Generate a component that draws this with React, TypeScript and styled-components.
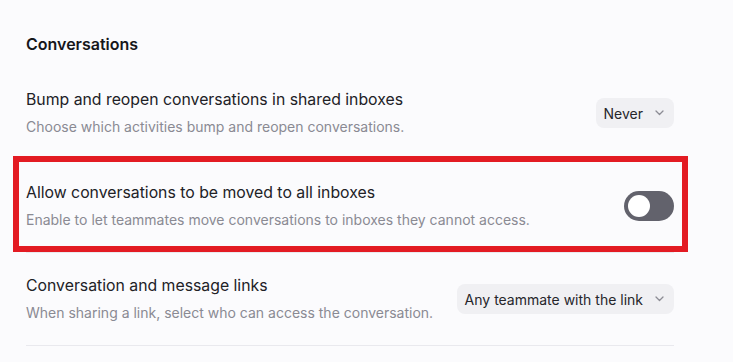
import React from "react";
import styled, { createGlobalStyle, css } from "styled-components";

const GlobalStyle = createGlobalStyle`
  html, body {
    margin: 0;
    padding: 0;
    background: #fbfbfd;
    font-family: Inter, "Noto Sans", sans-serif;
    -webkit-font-smoothing: antialiased;
  }
`;

const Page = styled.div`
  width: 733px;
  height: 362px;
  box-sizing: border-box;
  padding: 34px 59px 0 26px;
  background: #fbfbfd;
  overflow: hidden;
`;

const Heading = styled.h2`
  margin: 0 0 13px;
  font-size: 16px;
  line-height: 20px;
  font-weight: 600;
  color: #16161a;
`;

const List = styled.div`
  display: flex;
  flex-direction: column;
`;

const Row = styled.div<{ $highlighted?: boolean }>`
  position: relative;
  display: flex;
  align-items: center;
  justify-content: space-between;
  padding: 23px 0;
  border-bottom: 1px solid #e9e9ee;
  ${(p) =>
    p.$highlighted &&
    css`
      &::after {
        content: "";
        position: absolute;
        top: -4px;
        bottom: 0;
        left: -13px;
        right: -14px;
        border: 6px solid #e31b23;
        pointer-events: none;
      }
    `}
`;

const Texts = styled.div`
  display: flex;
  flex-direction: column;
  gap: 8px;
`;

const Title = styled.div`
  font-size: 15.8px;
  line-height: 20px;
  color: #212126;
`;

const Description = styled.div`
  font-size: 14px;
  line-height: 18px;
  color: #8a8a93;
`;

const Select = styled.button`
  display: flex;
  align-items: center;
  gap: 12px;
  height: 30px;
  padding: 0 10px 0 8px;
  border: none;
  border-radius: 8px;
  background: #f0f0f3;
  font-family: Inter, "Noto Sans", sans-serif;
  font-size: 14px;
  color: #26262b;
  cursor: pointer;
`;

const Toggle = styled.div<{ $on?: boolean }>`
  display: flex;
  align-items: center;
  justify-content: ${(p) => (p.$on ? "flex-end" : "flex-start")};
  width: 50px;
  height: 30px;
  box-sizing: border-box;
  padding: 0 4px;
  border-radius: 15px;
  background: #62626c;
`;

const Knob = styled.div`
  width: 22px;
  height: 22px;
  border-radius: 50%;
  background: #ffffff;
`;

const Chevron = () => (
  <svg width="9" height="6" viewBox="0 0 9 6" fill="none">
    <polyline
      points="1,1 4.5,4.5 8,1"
      stroke="#8c8c94"
      strokeWidth="1.3"
      strokeLinecap="round"
      strokeLinejoin="round"
    />
  </svg>
);

export default function App() {
  return (
    <>
      <GlobalStyle />
      <Page>
        <Heading>Conversations</Heading>
        <List>
          <Row>
            <Texts>
              <Title>Bump and reopen conversations in shared inboxes</Title>
              <Description>Choose which activities bump and reopen conversations.</Description>
            </Texts>
            <Select>
              Never
              <Chevron />
            </Select>
          </Row>
          <Row $highlighted>
            <Texts>
              <Title>Allow conversations to be moved to all inboxes</Title>
              <Description>
                Enable to let teammates move conversations to inboxes they cannot access.
              </Description>
            </Texts>
            <Toggle>
              <Knob />
            </Toggle>
          </Row>
          <Row>
            <Texts>
              <Title>Conversation and message links</Title>
              <Description>When sharing a link, select who can access the conversation.</Description>
            </Texts>
            <Select>
              Any teammate with the link
              <Chevron />
            </Select>
          </Row>
        </List>
      </Page>
    </>
  );
}
